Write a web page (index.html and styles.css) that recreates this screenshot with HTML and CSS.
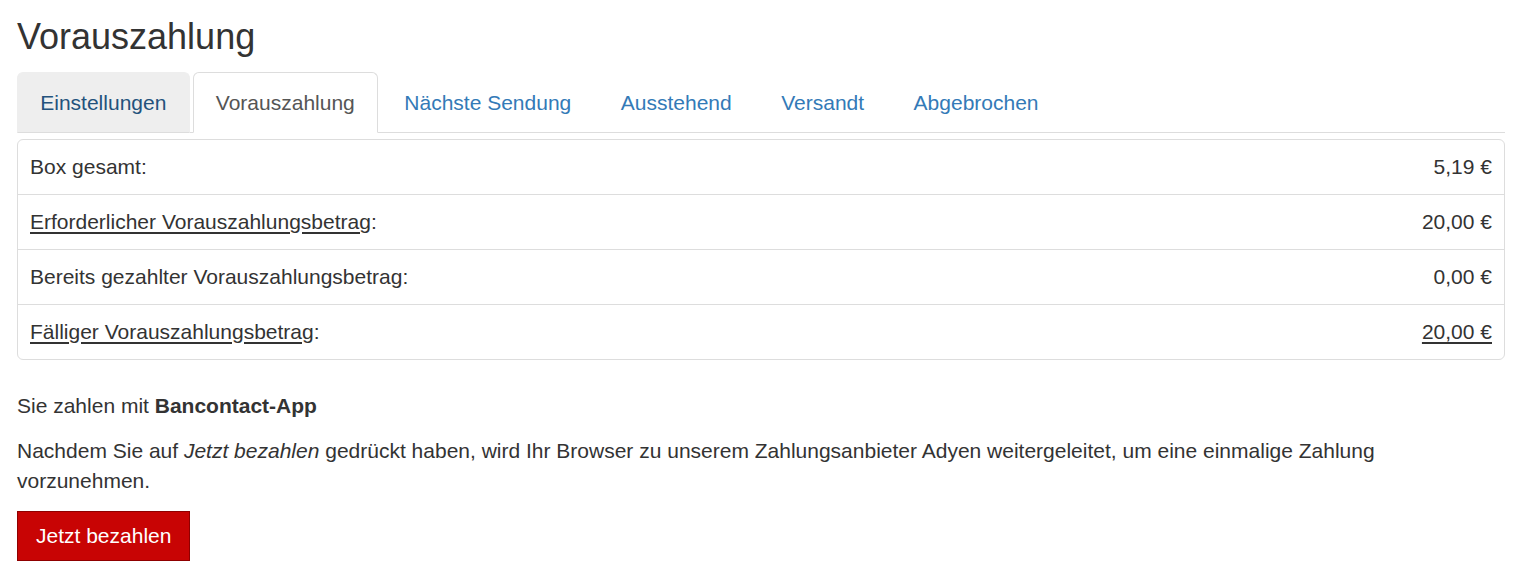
FILE: index.html
```html
<!doctype html>
<html>
<head>
    <title>Vorauszahlung</title>
    <link rel="stylesheet" href="styles.css">
</head>
<body>
<div class="page">
    <h1 class="title">Vorauszahlung</h1>

    <ul class="tabs">
        <li class="tab hover"><a href="#">Einstellungen</a></li>
        <li class="tab active"><a href="#">Vorauszahlung</a></li>
        <li class="tab"><a href="#">Nächste Sendung</a></li>
        <li class="tab"><a href="#">Ausstehend</a></li>
        <li class="tab"><a href="#">Versandt</a></li>
        <li class="tab"><a href="#">Abgebrochen</a></li>
    </ul>

    <div class="summary">
        <div class="row">
            <span>Box gesamt:</span>
            <span>5,19 €</span>
        </div>
        <div class="row">
            <span><abbr>Erforderlicher Vorauszahlungsbetrag</abbr>:</span>
            <span>20,00 €</span>
        </div>
        <div class="row">
            <span>Bereits gezahlter Vorauszahlungsbetrag:</span>
            <span>0,00 €</span>
        </div>
        <div class="row">
            <span><abbr>Fälliger Vorauszahlungsbetrag</abbr>:</span>
            <span><abbr>20,00 €</abbr></span>
        </div>
    </div>

    <p class="method">Sie zahlen mit <b>Bancontact-App</b></p>
    <p>Nachdem Sie auf <i>Jetzt bezahlen</i> gedrückt haben, wird Ihr Browser zu unserem Zahlungsanbieter Adyen weitergeleitet, um eine einmalige Zahlung vorzunehmen.</p>

    <button class="btn-pay">Jetzt bezahlen</button>
</div>
</body>
</html>
```

FILE: styles.css
```css
body {
    margin: 0;
    background: white;
    color: #333;
    font-family: "Liberation Sans", Arial, sans-serif;
    font-size: 21px;
    line-height: 30px;
}

.page {
    padding: 17px 23px 0 17px;
}

.title {
    font-size: 36px;
    font-weight: 400;
    line-height: 40px;
    margin: 0 0 15px 0;
    color: #333;
}

.tabs {
    list-style: none;
    margin: 0;
    padding: 0;
    display: flex;
    border-bottom: 1px solid #ddd;
}

.tab {
    margin-right: 3px;
    margin-bottom: -1px;
}

.tab a {
    display: block;
    padding: 14.5px 22.25px;
    border: 1px solid transparent;
    border-radius: 6px 6px 0 0;
    color: #337ab7;
    text-decoration: none;
}

.tab.hover a {
    background: #eee;
    border-color: #eee #eee #ddd;
    color: #23527c;
}

.tab.active a {
    background: white;
    border-color: #ddd #ddd transparent;
    color: #555;
}

.summary {
    margin-top: 6px;
    border: 1px solid #ddd;
    border-radius: 6px;
}

.row {
    display: flex;
    justify-content: space-between;
    padding: 12px;
    border-top: 1px solid #ddd;
}

.row:first-child {
    border-top: none;
}

abbr {
    text-decoration: underline;
    text-underline-offset: 3px;
}

p {
    margin: 0 0 15px 0;
}

.method {
    margin-top: 31px;
}

.btn-pay {
    font-family: inherit;
    font-size: 21px;
    line-height: 30px;
    padding: 9px 18px;
    color: white;
    background: #c80404;
    border: 1px solid #8f0000;
    border-radius: 0;
}
```
